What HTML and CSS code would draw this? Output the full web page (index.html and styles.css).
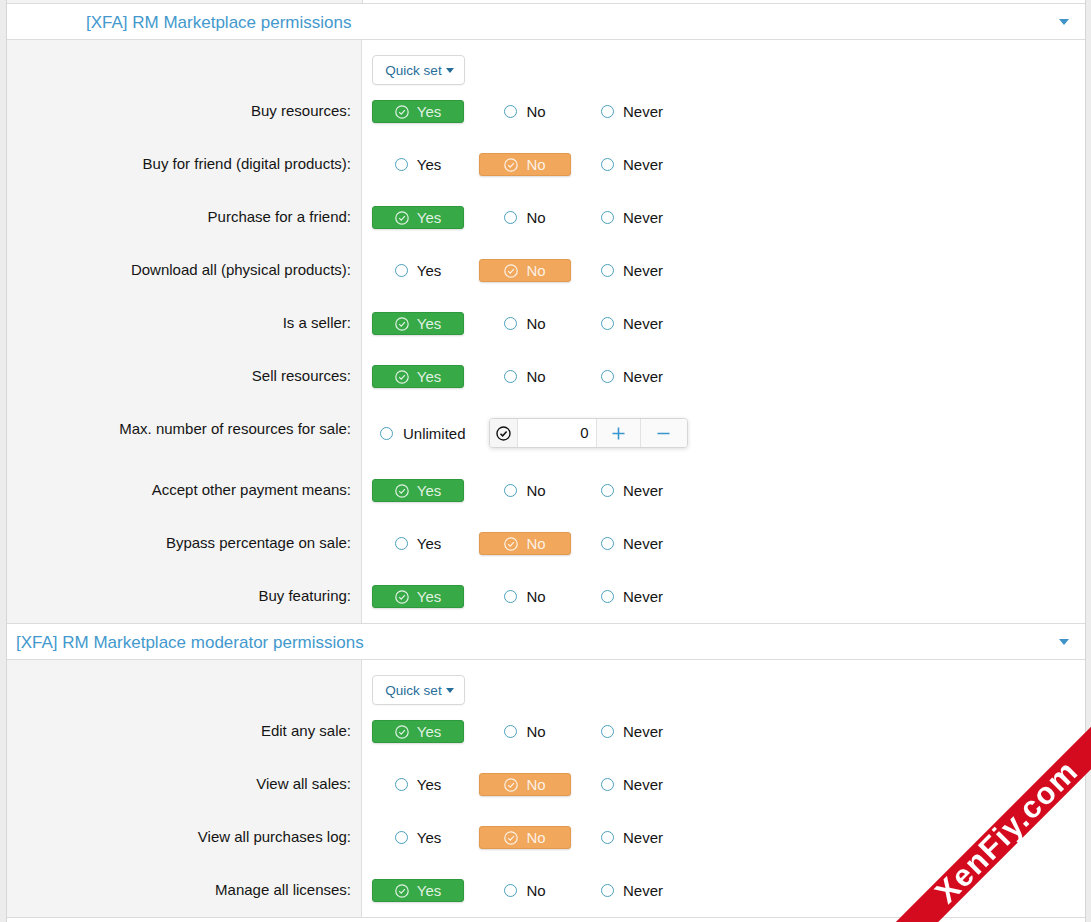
FILE: index.html
```html
<!DOCTYPE html>
<html>
<head>
<meta charset="utf-8">
<link rel="stylesheet" href="styles.css">
</head>
<body>
<div class="page">
  <div class="prev"><div class="lcol"></div><div class="rcol"></div></div>

  <section class="perm-section">
    <h3 class="sec-head indent">
      <span>[XFA] RM Marketplace permissions</span>
      <svg class="caret" width="10" height="6" viewBox="0 0 10 6"><path d="M0 0H10L5 6Z" fill="#3f93c8"/></svg>
    </h3>
    <div class="sec-body">
      <div class="row quick"><div class="label"></div><div class="ctrl"><button class="quickset">Quick set <svg width="8" height="5" viewBox="0 0 8 5"><path d="M0 0H8L4 5Z" fill="#266d98"/></svg></button></div></div>

      <div class="row"><div class="label">Buy resources:</div><div class="ctrl"><div class="choices">
        <span class="choice on yes"><svg class="chk" width="14" height="14" viewBox="0 0 14 14"><circle cx="7" cy="7" r="6.2" fill="none" stroke="currentColor" stroke-width="1.2"/><path d="M4.2 7.2L6.2 9.2L9.9 5.2" fill="none" stroke="currentColor" stroke-width="1.2"/></svg>Yes</span>
        <span class="choice"><i class="radio"></i>No</span>
        <span class="choice"><i class="radio"></i>Never</span>
      </div></div></div>

      <div class="row"><div class="label">Buy for friend (digital products):</div><div class="ctrl"><div class="choices">
        <span class="choice"><i class="radio"></i>Yes</span>
        <span class="choice on no"><svg class="chk" width="14" height="14" viewBox="0 0 14 14"><circle cx="7" cy="7" r="6.2" fill="none" stroke="currentColor" stroke-width="1.2"/><path d="M4.2 7.2L6.2 9.2L9.9 5.2" fill="none" stroke="currentColor" stroke-width="1.2"/></svg>No</span>
        <span class="choice"><i class="radio"></i>Never</span>
      </div></div></div>

      <div class="row"><div class="label">Purchase for a friend:</div><div class="ctrl"><div class="choices">
        <span class="choice on yes"><svg class="chk" width="14" height="14" viewBox="0 0 14 14"><circle cx="7" cy="7" r="6.2" fill="none" stroke="currentColor" stroke-width="1.2"/><path d="M4.2 7.2L6.2 9.2L9.9 5.2" fill="none" stroke="currentColor" stroke-width="1.2"/></svg>Yes</span>
        <span class="choice"><i class="radio"></i>No</span>
        <span class="choice"><i class="radio"></i>Never</span>
      </div></div></div>

      <div class="row"><div class="label">Download all (physical products):</div><div class="ctrl"><div class="choices">
        <span class="choice"><i class="radio"></i>Yes</span>
        <span class="choice on no"><svg class="chk" width="14" height="14" viewBox="0 0 14 14"><circle cx="7" cy="7" r="6.2" fill="none" stroke="currentColor" stroke-width="1.2"/><path d="M4.2 7.2L6.2 9.2L9.9 5.2" fill="none" stroke="currentColor" stroke-width="1.2"/></svg>No</span>
        <span class="choice"><i class="radio"></i>Never</span>
      </div></div></div>

      <div class="row"><div class="label">Is a seller:</div><div class="ctrl"><div class="choices">
        <span class="choice on yes"><svg class="chk" width="14" height="14" viewBox="0 0 14 14"><circle cx="7" cy="7" r="6.2" fill="none" stroke="currentColor" stroke-width="1.2"/><path d="M4.2 7.2L6.2 9.2L9.9 5.2" fill="none" stroke="currentColor" stroke-width="1.2"/></svg>Yes</span>
        <span class="choice"><i class="radio"></i>No</span>
        <span class="choice"><i class="radio"></i>Never</span>
      </div></div></div>

      <div class="row"><div class="label">Sell resources:</div><div class="ctrl"><div class="choices">
        <span class="choice on yes"><svg class="chk" width="14" height="14" viewBox="0 0 14 14"><circle cx="7" cy="7" r="6.2" fill="none" stroke="currentColor" stroke-width="1.2"/><path d="M4.2 7.2L6.2 9.2L9.9 5.2" fill="none" stroke="currentColor" stroke-width="1.2"/></svg>Yes</span>
        <span class="choice"><i class="radio"></i>No</span>
        <span class="choice"><i class="radio"></i>Never</span>
      </div></div></div>

      <div class="row"><div class="label">Max. number of resources for sale:</div><div class="ctrl tall"><div class="numrow">
        <span class="unlimited"><i class="radio"></i>Unlimited</span>
        <div class="numbox">
          <span class="nb-check"><svg width="15" height="15" viewBox="0 0 14 14"><circle cx="7" cy="7" r="6.1" fill="none" stroke="#111" stroke-width="1.3"/><path d="M4.2 7.2L6.2 9.2L9.9 5.2" fill="none" stroke="#111" stroke-width="1.4"/></svg></span>
          <span class="nb-input">0</span>
          <span class="nb-btn"><svg width="13" height="13" viewBox="0 0 13 13"><path d="M6.5 0.5V12.5M0.5 6.5H12.5" stroke="#3a96cf" stroke-width="1.6"/></svg></span>
          <span class="nb-btn wide"><svg width="13" height="13" viewBox="0 0 13 13"><path d="M0.5 6.5H12.5" stroke="#3a96cf" stroke-width="1.6"/></svg></span>
        </div>
      </div></div></div>

      <div class="row"><div class="label">Accept other payment means:</div><div class="ctrl"><div class="choices">
        <span class="choice on yes"><svg class="chk" width="14" height="14" viewBox="0 0 14 14"><circle cx="7" cy="7" r="6.2" fill="none" stroke="currentColor" stroke-width="1.2"/><path d="M4.2 7.2L6.2 9.2L9.9 5.2" fill="none" stroke="currentColor" stroke-width="1.2"/></svg>Yes</span>
        <span class="choice"><i class="radio"></i>No</span>
        <span class="choice"><i class="radio"></i>Never</span>
      </div></div></div>

      <div class="row"><div class="label">Bypass percentage on sale:</div><div class="ctrl"><div class="choices">
        <span class="choice"><i class="radio"></i>Yes</span>
        <span class="choice on no"><svg class="chk" width="14" height="14" viewBox="0 0 14 14"><circle cx="7" cy="7" r="6.2" fill="none" stroke="currentColor" stroke-width="1.2"/><path d="M4.2 7.2L6.2 9.2L9.9 5.2" fill="none" stroke="currentColor" stroke-width="1.2"/></svg>No</span>
        <span class="choice"><i class="radio"></i>Never</span>
      </div></div></div>

      <div class="row"><div class="label">Buy featuring:</div><div class="ctrl"><div class="choices">
        <span class="choice on yes"><svg class="chk" width="14" height="14" viewBox="0 0 14 14"><circle cx="7" cy="7" r="6.2" fill="none" stroke="currentColor" stroke-width="1.2"/><path d="M4.2 7.2L6.2 9.2L9.9 5.2" fill="none" stroke="currentColor" stroke-width="1.2"/></svg>Yes</span>
        <span class="choice"><i class="radio"></i>No</span>
        <span class="choice"><i class="radio"></i>Never</span>
      </div></div></div>
    </div>
  </section>

  <section class="perm-section">
    <h3 class="sec-head">
      <span>[XFA] RM Marketplace moderator permissions</span>
      <svg class="caret" width="10" height="6" viewBox="0 0 10 6"><path d="M0 0H10L5 6Z" fill="#3f93c8"/></svg>
    </h3>
    <div class="sec-body">
      <div class="row quick"><div class="label"></div><div class="ctrl"><button class="quickset">Quick set <svg width="8" height="5" viewBox="0 0 8 5"><path d="M0 0H8L4 5Z" fill="#266d98"/></svg></button></div></div>

      <div class="row"><div class="label">Edit any sale:</div><div class="ctrl"><div class="choices">
        <span class="choice on yes"><svg class="chk" width="14" height="14" viewBox="0 0 14 14"><circle cx="7" cy="7" r="6.2" fill="none" stroke="currentColor" stroke-width="1.2"/><path d="M4.2 7.2L6.2 9.2L9.9 5.2" fill="none" stroke="currentColor" stroke-width="1.2"/></svg>Yes</span>
        <span class="choice"><i class="radio"></i>No</span>
        <span class="choice"><i class="radio"></i>Never</span>
      </div></div></div>

      <div class="row"><div class="label">View all sales:</div><div class="ctrl"><div class="choices">
        <span class="choice"><i class="radio"></i>Yes</span>
        <span class="choice on no"><svg class="chk" width="14" height="14" viewBox="0 0 14 14"><circle cx="7" cy="7" r="6.2" fill="none" stroke="currentColor" stroke-width="1.2"/><path d="M4.2 7.2L6.2 9.2L9.9 5.2" fill="none" stroke="currentColor" stroke-width="1.2"/></svg>No</span>
        <span class="choice"><i class="radio"></i>Never</span>
      </div></div></div>

      <div class="row"><div class="label">View all purchases log:</div><div class="ctrl"><div class="choices">
        <span class="choice"><i class="radio"></i>Yes</span>
        <span class="choice on no"><svg class="chk" width="14" height="14" viewBox="0 0 14 14"><circle cx="7" cy="7" r="6.2" fill="none" stroke="currentColor" stroke-width="1.2"/><path d="M4.2 7.2L6.2 9.2L9.9 5.2" fill="none" stroke="currentColor" stroke-width="1.2"/></svg>No</span>
        <span class="choice"><i class="radio"></i>Never</span>
      </div></div></div>

      <div class="row"><div class="label">Manage all licenses:</div><div class="ctrl"><div class="choices">
        <span class="choice on yes"><svg class="chk" width="14" height="14" viewBox="0 0 14 14"><circle cx="7" cy="7" r="6.2" fill="none" stroke="currentColor" stroke-width="1.2"/><path d="M4.2 7.2L6.2 9.2L9.9 5.2" fill="none" stroke="currentColor" stroke-width="1.2"/></svg>Yes</span>
        <span class="choice"><i class="radio"></i>No</span>
        <span class="choice"><i class="radio"></i>Never</span>
      </div></div></div>
    </div>
  </section>
  <div class="next"></div>
</div>

<div class="ribbon-wrap"><div class="ribbon">XenFiy.com</div></div>
</body>
</html>
```

FILE: styles.css
```css
html, body {
  margin: 0;
  padding: 0;
}
body {
  background: #ececec;
  font-family: "Liberation Sans", Arial, sans-serif;
  font-size: 15px;
  color: #141414;
  overflow: hidden;
}
.page {
  margin: 0 5px 0 6px;
  border-left: 1px solid #d6d6d6;
  border-right: 1px solid #d6d6d6;
  background: #fff;
}
.prev {
  display: flex;
  height: 3px;
}
.prev .lcol {
  width: 355px;
  background: #f4f4f4;
  border-right: 1px solid #dedede;
}
.prev .rcol {
  flex: 1;
}
.sec-head {
  margin: 0;
  height: 35px;
  border-top: 1px solid #dcdcdc;
  border-bottom: 1px solid #dcdcdc;
  display: flex;
  align-items: center;
  justify-content: space-between;
  padding: 0 16px 0 9px;
  font-size: 17px;
  font-weight: normal;
  color: #4399cd;
  background: #fff;
}
.sec-head.indent {
  padding-left: 79px;
}
.sec-head span {
  position: relative;
  top: 1px;
}
.caret {
  display: block;
}
.row {
  display: flex;
}
.label {
  width: 355px;
  flex: none;
  box-sizing: border-box;
  background: #f4f4f4;
  border-right: 1px solid #dedede;
  text-align: right;
  padding: 16px 10px 0 0;
  line-height: 20px;
}
.ctrl {
  flex: 1;
  padding: 15px 10px;
}
.ctrl.tall {
  padding-bottom: 16px;
}
.row.quick .ctrl {
  padding-bottom: 0;
}
.quickset {
  box-sizing: border-box;
  width: 93px;
  height: 30px;
  border: 1px solid #d9d9d9;
  border-radius: 4px;
  background: #fff;
  color: #266d98;
  font-family: "Liberation Sans", Arial, sans-serif;
  font-size: 13.5px;
  display: flex;
  align-items: center;
  justify-content: center;
  gap: 4px;
  padding: 0 0 0 2px;
  box-shadow: 0 1px 1px rgba(0, 0, 0, 0.04);
}
.choices {
  display: flex;
  gap: 15px;
}
.choice {
  box-sizing: border-box;
  width: 92px;
  height: 23px;
  display: flex;
  align-items: center;
  justify-content: center;
  gap: 8px;
  border: 1px solid transparent;
  border-radius: 3px;
  line-height: 1;
}
.choice.on {
  color: rgba(255, 255, 255, 0.86);
  box-shadow: 0 1px 2px rgba(0, 0, 0, 0.15);
}
.choice.yes {
  background: #37a947;
  border-color: #2e9a3d;
}
.choice.no {
  background: #f1a75c;
  border-color: #e29a4e;
}
.chk {
  display: block;
  flex: none;
}
.radio {
  display: block;
  box-sizing: border-box;
  width: 13px;
  height: 13px;
  border: 1.3px solid #4aa0bd;
  border-radius: 50%;
  background: #fff;
  flex: none;
  margin-right: 1px;
}
.numrow {
  display: flex;
  align-items: center;
}
.unlimited {
  display: flex;
  align-items: center;
  gap: 9px;
  padding-left: 8px;
  margin-right: 23px;
}
.numbox {
  display: flex;
  height: 30px;
  box-sizing: border-box;
  border: 1px solid #d6d6d6;
  border-radius: 4px;
  box-shadow: 0 1px 4px rgba(0, 0, 0, 0.14);
  overflow: hidden;
  background: #fff;
}
.nb-check {
  width: 27px;
  display: flex;
  align-items: center;
  justify-content: center;
  background: #f6f6f6;
  border-right: 1px solid #e2e2e2;
}
.nb-input {
  width: 79px;
  box-sizing: border-box;
  text-align: right;
  padding-right: 7px;
  line-height: 28px;
  border-right: 1px solid #e2e2e2;
}
.nb-btn {
  width: 43px;
  display: flex;
  align-items: center;
  justify-content: center;
  background: #fafafa;
  border-right: 1px solid #e2e2e2;
}
.nb-btn.wide {
  width: 46px;
  border-right: none;
}
.next {
  height: 20px;
  border-top: 1px solid #dcdcdc;
  background: #fff;
}
.ribbon-wrap {
  position: fixed;
  left: 0;
  top: 0;
  width: 1091px;
  height: 922px;
  overflow: hidden;
  pointer-events: none;
}
.ribbon {
  position: absolute;
  left: 797px;
  top: 817px;
  width: 420px;
  height: 30px;
  background: #d40b1e;
  color: #fff;
  font-family: "Liberation Sans", Arial, sans-serif;
  font-weight: bold;
  font-size: 31px;
  letter-spacing: 1.5px;
  line-height: 30px;
  text-align: center;
  transform: rotate(-45deg);
}
```
